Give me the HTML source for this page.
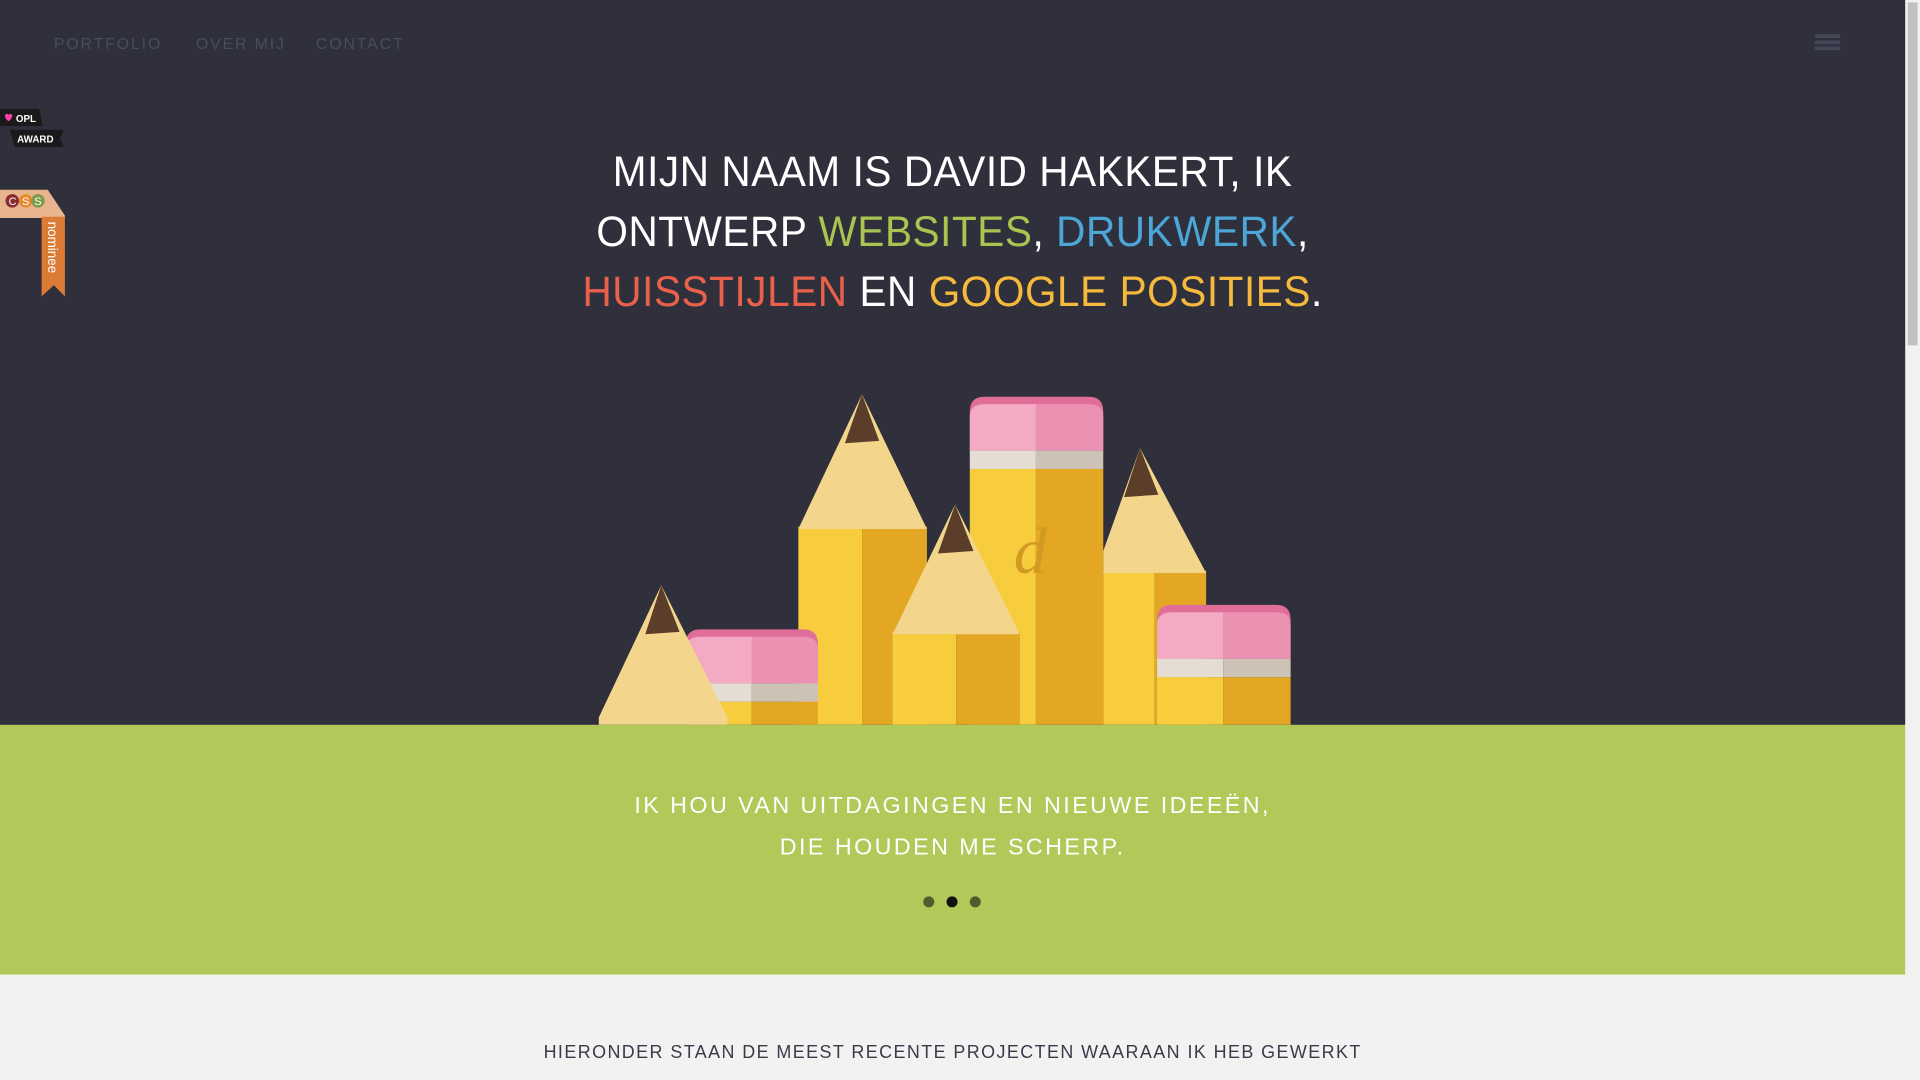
<!DOCTYPE html>
<html><head><meta charset="utf-8"><style>
html,body{margin:0;padding:0;width:1920px;height:1080px;overflow:hidden;background:#f2f2f2}
#w{position:absolute;left:0;top:0;width:1568px;height:882px;transform:scale(1.22449);transform-origin:0 0;font-family:"Liberation Sans",sans-serif}
.dark{position:absolute;left:0;top:0;width:1556px;height:592px;background:#2f303c;overflow:hidden}
.green{position:absolute;left:0;top:592px;width:1556px;height:204px;background:#b2c859}
.light{position:absolute;left:0;top:796px;width:1556px;height:86px;background:#f2f2f2}
.sb{position:absolute;left:1556px;top:0;width:12px;height:882px;background:#f1f1f1}
.sb div{position:absolute;left:2px;top:2px;width:8px;height:280px;background:#c1c1c1;border-radius:0}
.nav{position:absolute;top:28px;font-size:13px;letter-spacing:1.5px;color:#4a4c5c}
.hb{position:absolute;left:1482px;width:21px;height:3px;background:#454757;border-radius:1px}
h1{position:absolute;left:0;top:116px;width:1556px;margin:0;text-align:center;color:#fff;font-weight:normal;font-size:35px;line-height:49px;letter-spacing:0.5px;transform:scaleX(0.945);transform-origin:778px 0}
.g{color:#a9c450}.b{color:#4da6d8}.r{color:#e9604b}.y{color:#f6b93b}
.gt{position:absolute;left:0;width:1556px;text-align:center;color:#fff;font-size:19px;letter-spacing:2px;transform:scaleX(1.0);transform-origin:778px 0}
.dot{position:absolute;top:732px;width:9px;height:9px;border-radius:50%;background:#525c2a}
.bt{position:absolute;left:0;top:851px;width:1556px;text-align:center;color:#3a3b48;font-size:15px;letter-spacing:1.2px;transform:scaleX(0.975);transform-origin:778px 0}
</style></head><body><div id="w">
<div class="dark">
<div class="nav" style="left:44px">PORTFOLIO</div>
<div class="nav" style="left:160px">OVER MIJ</div>
<div class="nav" style="left:258px">CONTACT</div>
<div class="hb" style="top:28px"></div><div class="hb" style="top:33px"></div><div class="hb" style="top:38px"></div>
<h1>MIJN NAAM IS DAVID HAKKERT, IK<br>ONTWERP <span class="g">WEBSITES</span>, <span class="b">DRUKWERK</span>,<br><span class="r">HUISSTIJLEN</span> EN <span class="y">GOOGLE POSITIES</span>.</h1>
<svg style="position:absolute;left:0;top:0" width="1556" height="592" viewBox="0 0 1556 592">
<!-- Pencil C tall -->
<rect x="652" y="430" width="52" height="162" fill="#f8cd3d"/><rect x="704" y="430" width="53" height="162" fill="#e3a724"/>
<polygon points="704,322 757,432 652,432" fill="#f3d58b"/>
<polygon points="704,322 718,360 690,362" fill="#5b3e2a"/>
<!-- Pencil E eraser tall -->
<rect x="792" y="383" width="54" height="209" fill="#f8cd3d"/><rect x="846" y="383" width="55" height="209" fill="#e3a724"/>
<path d="M792,368 V336 Q792,324 804,324 H889 Q901,324 901,336 V368Z" fill="#e06e98"/>
<path d="M792,368 V340 Q792,330 804,330 H846 V368Z" fill="#f4aac2"/><path d="M846,330 H889 Q901,330 901,340 V368 H846Z" fill="#eb91b2"/>
<rect x="792" y="368" width="54" height="15" fill="#e5ddd3"/><rect x="846" y="368" width="55" height="15" fill="#cdc2b6"/>
<text x="828" y="468" font-family="Liberation Serif,serif" font-style="italic" font-size="54" fill="#d29a23">d</text>
<!-- Pencil F -->
<rect x="901" y="466" width="42" height="126" fill="#f8cd3d"/><rect x="943" y="466" width="42" height="126" fill="#e3a724"/>
<polygon points="931,366 985,468 901,468 901,450" fill="#f3d58b"/>
<polygon points="931,366 946,404 918,406" fill="#5b3e2a"/>
<!-- Pencil D -->
<rect x="729" y="516" width="52" height="76" fill="#f8cd3d"/><rect x="781" y="516" width="52" height="76" fill="#e3a724"/>
<polygon points="780,412 833,518 729,518" fill="#f3d58b"/>
<polygon points="780,412 795,450 766,452" fill="#5b3e2a"/>
<!-- Pencil B eraser -->
<rect x="560" y="573" width="54" height="19" fill="#f8cd3d"/><rect x="614" y="573" width="54" height="19" fill="#e3a724"/>
<path d="M560,558 V526 Q560,514 572,514 H656 Q668,514 668,526 V558Z" fill="#e06e98"/>
<path d="M560,558 V530 Q560,520 572,520 H614 V558Z" fill="#f4aac2"/><path d="M614,520 H656 Q668,520 668,530 V558 H614Z" fill="#eb91b2"/>
<rect x="560" y="558" width="54" height="15" fill="#e5ddd3"/><rect x="614" y="558" width="54" height="15" fill="#cdc2b6"/>
<!-- Pencil A -->
<polygon points="540,478 594,586 594,592 489,592 489,586" fill="#f3d58b"/>
<polygon points="540,478 555,516 527,518" fill="#5b3e2a"/>
<!-- Pencil G eraser -->
<rect x="945" y="553" width="54" height="39" fill="#f8cd3d"/><rect x="999" y="553" width="55" height="39" fill="#e3a724"/>
<path d="M945,538 V506 Q945,494 957,494 H1042 Q1054,494 1054,506 V538Z" fill="#e06e98"/>
<path d="M945,538 V510 Q945,500 957,500 H999 V538Z" fill="#f4aac2"/><path d="M999,500 H1042 Q1054,500 1054,510 V538 H999Z" fill="#eb91b2"/>
<rect x="945" y="538" width="54" height="15" fill="#e5ddd3"/><rect x="999" y="538" width="55" height="15" fill="#cdc2b6"/>
<!-- badges -->
<polygon points="0,89 32,89 35,103 0,103" fill="#1a1a1a"/>
<path d="M4,94 q2,-2 3,0 q1,-2 3,0 q0,3 -3,5 q-3,-2 -3,-5z" fill="#ff3db3"/>
<text x="13" y="99.5" font-family="Liberation Sans,sans-serif" font-weight="bold" font-size="8" fill="#fff">OPL</text>
<polygon points="8,106 52,106 49,113 52,120 12,120" fill="#1a1a1a"/>
<text x="14" y="116.5" font-family="Liberation Sans,sans-serif" font-weight="bold" font-size="8" fill="#fff">AWARD</text>
<polygon points="0,155 39,155 53,176 53,178 0,178" fill="#e8b48e"/>
<circle cx="10" cy="164" r="5.5" fill="#8a2a33"/><circle cx="21" cy="164" r="5.5" fill="#e9892e"/><circle cx="31" cy="164" r="5.5" fill="#7e9a4b"/>
<text x="7" y="167.5" font-size="9" fill="#fff" font-family="Liberation Sans,sans-serif">C</text><text x="18" y="167.5" font-size="9" fill="#fff" font-family="Liberation Sans,sans-serif">S</text><text x="28" y="167.5" font-size="9" fill="#fff" font-family="Liberation Sans,sans-serif">S</text>
<polygon points="34,177 53,177 53,242 44,233 34,242" fill="#dc7b35"/>
<text transform="translate(39,181) rotate(90)" font-size="11" fill="#fff" font-family="Liberation Sans,sans-serif">nominee</text>
</svg>
</div>
<div class="green">
<div class="gt" style="top:56px">IK HOU VAN UITDAGINGEN EN NIEUWE IDEEËN,</div>
<div class="gt" style="top:90px">DIE HOUDEN ME SCHERP.</div>
</div>
<div class="dot" style="left:754px"></div><div class="dot" style="left:773px;background:#111"></div><div class="dot" style="left:792px"></div>
<div class="light"></div>
<div class="bt">HIERONDER STAAN DE MEEST RECENTE PROJECTEN WAARAAN IK HEB GEWERKT</div>
<div class="sb"><div></div></div>
</div></body></html>
